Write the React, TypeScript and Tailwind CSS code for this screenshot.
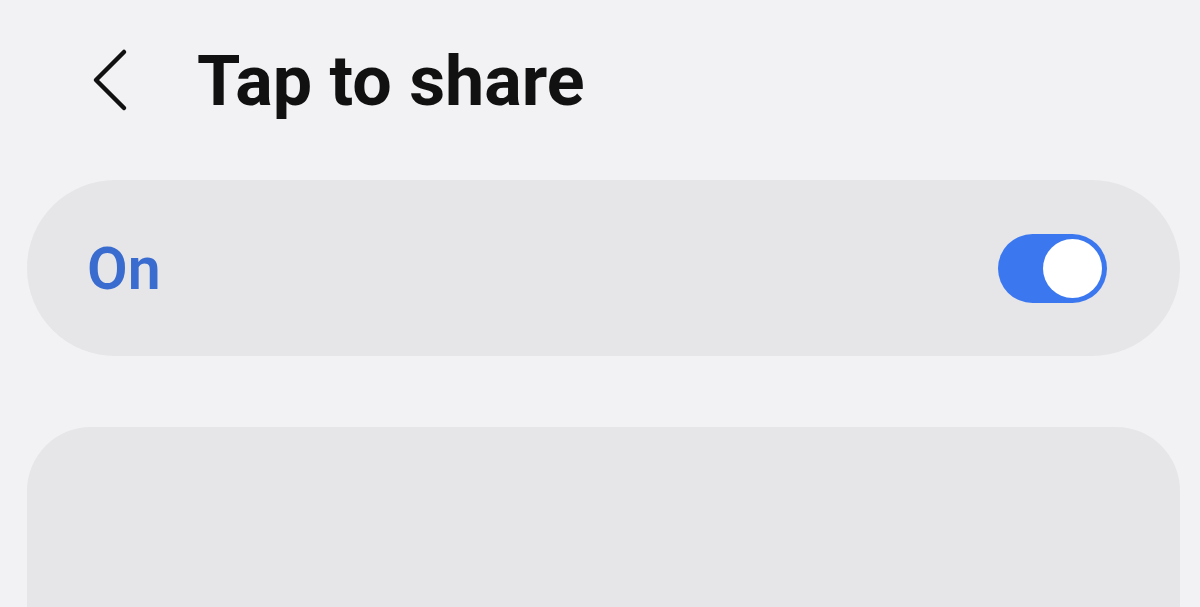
import React from 'react';

function BackChevron() {
  return (
    <svg width="40" height="64" viewBox="0 0 40 64" fill="none" className="shrink-0">
      <path
        d="M33 4 L5 32 L33 60"
        stroke="#111"
        strokeWidth="4.5"
        strokeLinecap="round"
        strokeLinejoin="round"
      />
    </svg>
  );
}

function Toggle({ on }: { on: boolean }) {
  return (
    <div
      className={`w-[109px] h-[69px] rounded-full p-[5px] flex items-center ${
        on ? 'bg-[#3b78f0] justify-end' : 'bg-gray-400 justify-start'
      }`}
    >
      <div className="w-[59px] h-[59px] rounded-full bg-white" />
    </div>
  );
}

export default function App() {
  return (
    <div
      className="w-[1200px] h-[607px] overflow-hidden bg-[#f2f2f4] pl-[27px] pr-[20px]"
      style={{ fontFamily: 'Roboto, "Noto Sans", sans-serif' }}
    >
      {/* Header */}
      <div className="h-[160px] flex items-center pl-[64px] gap-[66px]">
        <BackChevron />
        <h1 className="text-[70px] font-bold leading-none text-[#111] pt-[2px]">
          Tap to share
        </h1>
      </div>

      {/* Main switch */}
      <div className="mt-[20px] h-[176px] rounded-full bg-[#e6e6e8] flex items-center justify-between pl-[60px] pr-[73px]">
        <span className="text-[59px] font-semibold leading-none text-[#3a6cd0]">On</span>
        <Toggle on />
      </div>

      {/* Settings group */}
      <div className="mt-[71px] h-[300px] rounded-[64px] bg-[#e6e6e8]" />
    </div>
  );
}
